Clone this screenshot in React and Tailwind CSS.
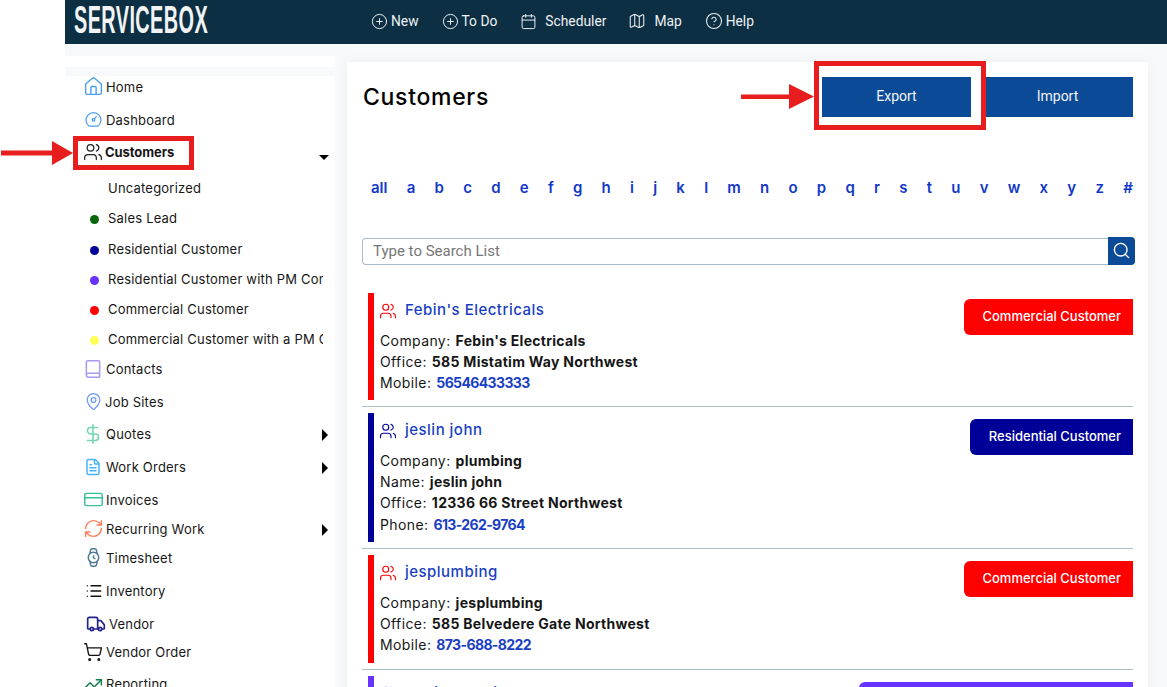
import React from "react";
import { Home, Users, Book, MapPin, DollarSign, FileText, CreditCard, RefreshCw, Watch, List, Truck, ShoppingCart, TrendingUp, CirclePlus, Calendar, Map as MapIcon, CircleHelp, Search } from "lucide-react";

const M = "font-['Inter','Noto_Sans',sans-serif]";

function Dial({ size, strokeWidth, className }) {
  return (
    <svg width={size} height={size} viewBox="0 0 24 24" fill="none" stroke="currentColor" strokeWidth={strokeWidth} strokeLinecap="round" strokeLinejoin="round" className={className}>
      <path d="M6 21.5a10.5 10.5 0 1 1 12 0z" />
      <circle cx="12" cy="12.5" r="1.8" />
      <path d="M13.3 11.2L16 8" />
    </svg>
  );
}

const nav = [
  { t: "Home", I: Home, s: 21, w: 1.6, c: "text-[#4a9ff0]", m: "mt-[3px]" },
  { t: "Dashboard", I: Dial, s: 17, w: 1.8, c: "text-[#4a9ff0]", m: "mt-[9px]" },
  { t: "Customers", I: Users, s: 20, w: 1.5, c: "text-[#222]", m: "mt-[8px]", bold: true, caret: "down", tx: "-ml-px" },
  { sub: "Uncategorized", m: "mt-[12px]" },
  { sub: "Sales Lead", dot: "bg-[#0a660a]", m: "mt-[6px]" },
  { sub: "Residential Customer", dot: "bg-[#000099]", m: "mt-[7px]" },
  { sub: "Residential Customer with PM Contract", dot: "bg-[#6633ff]", m: "mt-[6px]" },
  { sub: "Commercial Customer", dot: "bg-[#ff0000]", m: "mt-[6px]" },
  { sub: "Commercial Customer with a PM Contract", dot: "bg-[#ffff55]", m: "mt-[6px]" },
  { t: "Contacts", I: Book, s: 20, w: 1.8, c: "text-[#a99af0]", m: "mt-[6px]" },
  { t: "Job Sites", I: MapPin, s: 19, w: 1.6, c: "text-[#6f9cf0]", m: "mt-[9px]", tx: "-ml-px" },
  { t: "Quotes", I: DollarSign, s: 22, w: 1.7, c: "text-[#72d6b0]", m: "mt-[8px]", caret: "right" },
  { t: "Work Orders", I: FileText, s: 18, w: 2, c: "text-[#45b5fa]", m: "mt-[9px]", caret: "right" },
  { t: "Invoices", I: CreditCard, s: 21, w: 1.7, c: "text-[#35c09c]", m: "mt-[9px]" },
  { t: "Recurring Work", I: RefreshCw, s: 21, w: 1.7, c: "text-[#fb7f5c]", m: "mt-[5px]", caret: "right" },
  { t: "Timesheet", I: Watch, s: 21, w: 1.7, c: "text-[#4f7a96]", m: "mt-[5px]" },
  { t: "Inventory", I: List, s: 18, w: 1.8, c: "text-[#111]", m: "mt-[9px]", ic: "translate-x-px" },
  { t: "Vendor", I: Truck, s: 20, w: 2, c: "text-[#25228c]", m: "mt-[9px]", tx: "ml-[3px]", ic: "translate-x-[3px]" },
  { t: "Vendor Order", I: ShoppingCart, s: 20, w: 1.6, c: "text-[#111]", m: "mt-[4px]" },
  { t: "Reporting", I: TrendingUp, s: 20, w: 1.8, c: "text-[#11804a]", m: "mt-[8px]" },
];

const letters = "all a b c d e f g h i j k l m n o p q r s t u v w x y z #".split(" ");

const rows = [
  {
    name: "Febin's Electricals", color: "bg-[#ff0000]", tc: "text-[#ff0000]", badge: "Commercial Customer", bw: "w-[169px]", rowH: "h-[120px]", barH: "h-[107px]",
    lines: [["Company:", "Febin's Electricals"], ["Office:", "585 Mistatim Way Northwest"], ["Mobile:", "56546433333", true]],
  },
  {
    name: "jeslin john", color: "bg-[#000099]", tc: "text-[#000099]", badge: "Residential Customer", bw: "w-[163px]", rowH: "h-[142px]", barH: "h-[129px]",
    lines: [["Company:", "plumbing"], ["Name:", "jeslin john"], ["Office:", "12336 66 Street Northwest"], ["Phone:", "613-262-9764", true]],
  },
  {
    name: "jesplumbing", color: "bg-[#ff0000]", tc: "text-[#ff0000]", badge: "Commercial Customer", bw: "w-[169px]", rowH: "h-[121px]", barH: "h-[108px]",
    lines: [["Company:", "jesplumbing"], ["Office:", "585 Belvedere Gate Northwest"], ["Mobile:", "873-688-8222", true]],
  },
  {
    name: "marina khalid", color: "bg-[#6633ff]", tc: "text-[#6633ff]", badge: "Residential Customer with PM Contract", bw: "w-[274px]", rowH: "h-[120px]", barH: "h-[107px]",
    lines: [],
  },
];

function NavRow({ item }) {
  if (item.sub) {
    return (
      <div className={`flex h-6 items-center ${item.m}`}>
        <span className="flex w-[43px] shrink-0 justify-end pr-[9px]">
          {item.dot && <span className={`h-[9px] w-[9px] rounded-full ${item.dot}`} />}
        </span>
        <span className="w-[215px] overflow-hidden whitespace-nowrap text-[13px] tracking-[0.016em] text-[#161616]">{item.sub}</span>
      </div>
    );
  }
  const { I } = item;
  return (
    <div className={`flex h-6 items-center ${item.m}`}>
      <span className={`-mr-[5px] -mt-[3px] ml-[10px] flex w-[36px] shrink-0 justify-center ${item.ic || ""}`}>
        <I size={item.s} strokeWidth={item.w} className={item.c} />
      </span>
      <span className={`text-[13px] text-[#161616] ${item.bold ? "font-bold tracking-[-0.005em]" : "tracking-[0.016em]"} ${item.tx || ""}`}>{item.t}</span>
      <span className="flex-1" />
      {item.caret === "down" && <span className="mr-[6px] mt-[8px] h-0 w-0 border-x-[5px] border-t-[5px] border-x-transparent border-t-black" />}
      {item.caret === "right" && <span className="mr-[7px] h-0 w-0 border-y-[6px] border-l-[6px] border-y-transparent border-l-black" />}
    </div>
  );
}

function TopLink({ I, t, gap = "gap-[3px]", ml = "", s = 17 }) {
  return (
    <span className={`flex items-center ${gap} ${ml} text-[13.8px] font-normal text-[#eef1f3]`}>
      <I size={s} strokeWidth={1.4} />
      {t}
    </span>
  );
}

function CustomerRow({ r }) {
  return (
    <div className={`flex ${r.rowH} shrink-0 flex-col pt-[6px]`}>
      <div className="flex flex-1 items-start pl-[6px]">
        <div className={`w-[6px] ${r.barH} ${r.color}`} />
        <div className="ml-[6px] flex-1">
          <div className="mt-[8px] flex h-5 items-center">
            <Users size={18} strokeWidth={1.5} className={`-ml-px ${r.tc}`} />
            <span className="ml-[8px] text-[15px] font-medium tracking-[0.032em] text-[#1a3fc4]">{r.name}</span>
          </div>
          <div className="mt-[9px] text-[14px] leading-[21.34px] text-[#161616]">
            {r.lines.map(([a, b, link]) => (
              <div key={a} className="flex gap-[5px]">
                <span className="tracking-[0.028em]">{a}</span>
                <span className={`font-bold ${link ? "tracking-[-0.045em] text-[#1a3fc4]" : "tracking-[0.02em] text-[#161616]"}`}>{b}</span>
              </div>
            ))}
          </div>
        </div>
        <div className={`mt-[6px] flex h-9 ${r.bw} items-center justify-end rounded-l-[6px] pr-3 text-[13px] font-medium text-white ${r.color}`}>
          {r.badge}
        </div>
      </div>
      <div className="h-px bg-[#aebfcc]" />
    </div>
  );
}

export default function App() {
  return (
    <div className={`relative h-[687px] w-[1167px] overflow-hidden bg-white pl-[65px] ${M}`}>
      <div className="flex h-full flex-col bg-[#f8f9fb]">
        <header className="flex h-11 shrink-0 items-center bg-[#0c2f43]">
          <span className="-mr-[130px] mb-[5px] ml-[9px] block w-[264px] origin-left scale-x-[0.51] whitespace-nowrap font-['Liberation_Sans',sans-serif] text-[39px] font-bold leading-none tracking-[0.02em] text-[#f1f3f4]">SERVICEBOX</span>
          <nav className="mb-[2px] ml-[163px] flex items-center font-['Roboto',sans-serif]">
            <TopLink I={CirclePlus} t="New" />
            <TopLink I={CirclePlus} t="To Do" ml="ml-[23px]" />
            <TopLink I={Calendar} t="Scheduler" gap="gap-[8px]" ml="ml-[23px]" />
            <TopLink I={MapIcon} t="Map" s={18} gap="gap-[8px]" ml="ml-[22px]" />
            <TopLink I={CircleHelp} t="Help" s={18} gap="gap-[3px]" ml="ml-[23px]" />
          </nav>
        </header>
        <div className="flex min-h-0 flex-1">
          <aside className="mt-[12px] w-[270px] shrink-0">
            <div className="h-[11px] bg-white" />
            <div className="h-[6px]" />
            <div className="h-[700px] bg-white">
              {nav.map((n) => (
                <NavRow key={n.t || n.sub} item={n} />
              ))}
            </div>
          </aside>
          <main className="ml-3 mt-[18px] h-[760px] w-[801px] shrink-0 bg-white px-[15px] shadow-[0_0_12px_rgba(0,0,0,0.05)]">
            <div className="flex h-[55px] items-start pt-[15px]">
              <h1 className="ml-px mt-[5px] text-[23px] font-medium leading-[30px] tracking-[0.03em] text-black">Customers</h1>
              <div className="ml-auto flex gap-[11px] font-['Roboto',sans-serif] text-[14px] font-normal text-[#f2f5f9]">
                <button className="h-10 w-[149px] bg-[#0b4a97] pb-px">Export</button>
                <button className="h-10 w-[151px] bg-[#0b4a97] pb-px">Import</button>
              </div>
            </div>
            <div className="mt-[60px] flex w-[771px] justify-between pl-[9px] text-[15px] font-semibold text-[#1238c8]">
              {letters.map((l) => (
                <span key={l}>{l}</span>
              ))}
            </div>
            <div className="mt-[37px] flex h-7 w-[773px]">
              <div className="mt-px flex h-[27px] flex-1 items-center rounded-l-[4px] border border-r-0 border-[#a9bccc] pl-[10px] pt-px font-['Roboto',sans-serif] text-[15px] text-[#777]">Type to Search List</div>
              <div className="flex w-[27px] items-center justify-center rounded-r-[4px] bg-[#0b4a97] text-white">
                <Search size={19} strokeWidth={1.75} />
              </div>
            </div>
            <div className="mt-[22px] w-[771px]">
              {rows.map((r) => (
                <CustomerRow key={r.name} r={r} />
              ))}
            </div>
          </main>
        </div>
      </div>

      {/* annotations */}
      <div className="absolute left-[73px] top-[136px] h-[34px] w-[121px] border-[5px] border-[#e81e1e]" />
      <div className="absolute left-[814px] top-[61px] h-[69px] w-[172px] border-[5px] border-[#e81e1e]" />
      <svg className="absolute left-0 top-[140px]" width="74" height="26" viewBox="0 0 74 26">
        <path d="M1 10.5H52V1L73 13L52 25V15.5H1Z" fill="#e81e1e" />
      </svg>
      <svg className="absolute left-[741px] top-[84px]" width="74" height="25" viewBox="0 0 74 25">
        <path d="M0 10.5H48V0L73 12.5L48 25V15H0Z" fill="#e81e1e" />
      </svg>
    </div>
  );
}
